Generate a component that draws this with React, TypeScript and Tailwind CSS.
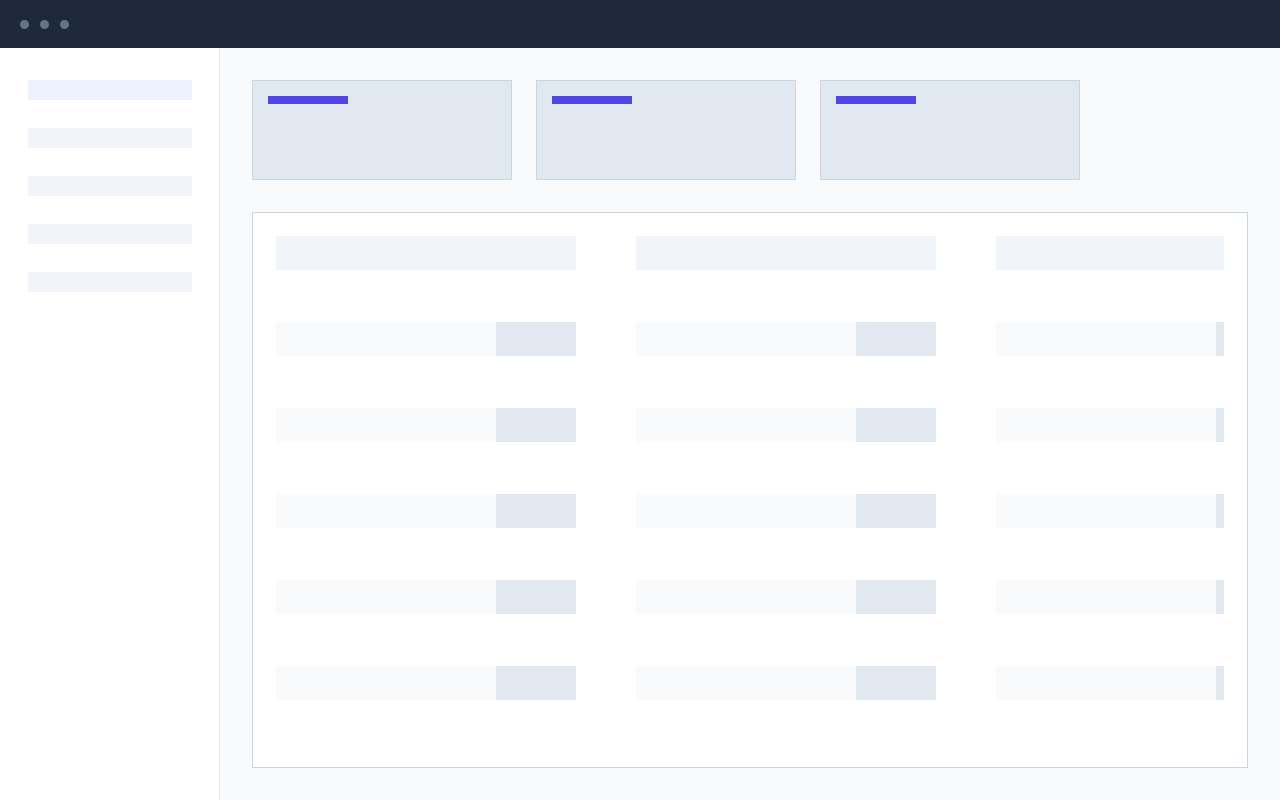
import React from "react";

const navItems = [0, 1, 2, 3, 4];
const summaryCards = [0, 1, 2];
const rows = [0, 1, 2, 3, 4];
const columns = [0, 1, 2];

function SkeletonCell() {
  return (
    <div className="flex h-[34px] w-[300px] shrink-0 justify-end bg-[#f8fafc]">
      <div className="h-full w-20 bg-[#e2e8f0]" />
    </div>
  );
}

export default function App() {
  return (
    <div className="flex h-[800px] w-[1280px] flex-col overflow-hidden bg-[#f8fafc]">
      {/* window chrome */}
      <header className="flex h-12 shrink-0 items-center gap-[11px] bg-[#1e293b] px-5">
        <span className="h-[9px] w-[9px] rounded-full bg-[#64748b]" />
        <span className="h-[9px] w-[9px] rounded-full bg-[#64748b]" />
        <span className="h-[9px] w-[9px] rounded-full bg-[#64748b]" />
      </header>

      <div className="flex min-h-0 flex-1">
        {/* sidebar nav placeholders */}
        <aside className="flex w-[220px] shrink-0 flex-col gap-7 border-r border-[#e2e8f0] bg-white px-7 pt-8">
          {navItems.map((i) => (
            <div
              key={i}
              className={`h-5 w-[164px] ${i === 0 ? "bg-[#eef2ff]" : "bg-[#f1f5f9]"}`}
            />
          ))}
        </aside>

        <main className="flex min-w-0 flex-1 flex-col gap-8 p-8">
          {/* summary cards */}
          <div className="flex gap-6">
            {summaryCards.map((i) => (
              <div
                key={i}
                className="h-[100px] w-[260px] border border-[#cbd5e1] bg-[#e2e8f0] p-[15px]"
              >
                <div className="h-2 w-20 bg-[#4f46e5]" />
              </div>
            ))}
          </div>

          {/* table skeleton */}
          <section className="min-h-0 flex-1 border border-[#cbd5e1] bg-white p-[23px]">
            <div className="flex h-full flex-col gap-[52px] overflow-hidden">
              <div className="flex gap-[60px]">
                {columns.map((c) => (
                  <div key={c} className="h-[34px] w-[300px] shrink-0 bg-[#f1f5f9]" />
                ))}
              </div>
              {rows.map((r) => (
                <div key={r} className="flex gap-[60px]">
                  {columns.map((c) => (
                    <SkeletonCell key={c} />
                  ))}
                </div>
              ))}
            </div>
          </section>
        </main>
      </div>
    </div>
  );
}
